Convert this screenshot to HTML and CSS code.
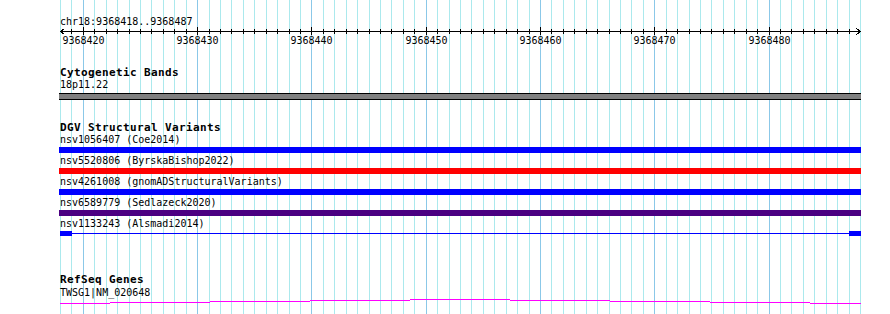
FILE: index.html
```html
<!DOCTYPE html>
<html lang="en">
<head>
    <meta charset="UTF-8">
    <title>chr18:9368418..9368487</title>
    <link rel="stylesheet" href="styles.css">
</head>
<body>

<div class="view">
    <!-- one line per base, drawn by the script below -->
    <svg class="grid" id="grid" width="802" height="314"></svg>

    <div class="locus">chr18:9368418..9368487</div>
    <svg class="ruler" id="ruler" width="802" height="22"></svg>

    <div class="track track-cyto">
        <div class="track-title">Cytogenetic Bands</div>
        <div class="feat-label">18p11.22</div>
        <div class="band"></div>
    </div>

    <div class="track track-dgv">
        <div class="track-title">DGV Structural Variants</div>
        <div class="feat">
            <div class="feat-label">nsv1056407 (Coe2014)</div>
            <div class="bar bar-blue"></div>
        </div>
        <div class="feat">
            <div class="feat-label">nsv5520806 (ByrskaBishop2022)</div>
            <div class="bar bar-red"></div>
        </div>
        <div class="feat">
            <div class="feat-label">nsv4261008 (gnomADStructuralVariants)</div>
            <div class="bar bar-blue"></div>
        </div>
        <div class="feat">
            <div class="feat-label">nsv6589779 (Sedlazeck2020)</div>
            <div class="bar bar-purple"></div>
        </div>
        <div class="feat">
            <div class="feat-label">nsv1133243 (Alsmadi2014)</div>
            <div class="span"><span class="span-end"></span><span class="span-end"></span></div>
        </div>
    </div>

    <div class="track track-genes">
        <div class="track-title">RefSeq Genes</div>
        <div class="feat-label gene-label">TWSG1|NM_020648</div>
        <svg class="wiggle" width="802" height="7">
            <rect x="0" y="5" width="50" height="1"/>
            <rect x="50" y="4" width="100" height="1"/>
            <rect x="150" y="3" width="100" height="1"/>
            <rect x="250" y="2" width="100" height="1"/>
            <rect x="350" y="1" width="100" height="1"/>
            <rect x="450" y="2" width="100" height="1"/>
            <rect x="550" y="3" width="100" height="1"/>
            <rect x="650" y="4" width="100" height="1"/>
            <rect x="750" y="5" width="51" height="1"/>
        </svg>
    </div>
</div>

<script>
    var NS = "http://www.w3.org/2000/svg";
    var START = 9368418;
    var BASES = 70;
    var WIDTH = 800;

    function add(parent, tag, attrs, text) {
        var el = document.createElementNS(NS, tag);
        for (var k in attrs) el.setAttribute(k, attrs[k]);
        if (text) el.textContent = text;
        parent.appendChild(el);
        return el;
    }

    var grid = document.getElementById("grid");
    var ruler = document.getElementById("ruler");

    add(ruler, "rect", {x: 0, y: 5, width: 801, height: 1, "class": "axis"});
    add(ruler, "path", {d: "M4.5,2.5 L0.5,5.5 L4.5,8.5", "class": "arrow"});
    add(ruler, "path", {d: "M796.5,2.5 L800.5,5.5 L796.5,8.5", "class": "arrow"});

    for (var i = 0; i <= BASES; i++) {
        var x = Math.round(i * WIDTH / BASES);
        var major = (START + i) % 10 === 0;
        add(grid, "rect", {x: x, y: 0, width: 1, height: 314, "class": major ? "line-major" : "line"});
        if (i === 0 || i === BASES) continue;
        add(ruler, "rect", {x: x, y: major ? 1 : 3, width: 1, height: major ? 8 : 5, "class": "axis"});
        if (major) {
            add(ruler, "text", {x: x + 0.5, y: 18, "class": "tick-label"}, String(START + i));
        }
    }
</script>

</body>
</html>
```

FILE: styles.css
```css
body {
    margin: 0;
    background: #ffffff;
    font-family: "DejaVu Sans Mono", "Liberation Mono", monospace;
    font-size: 10px;
    color: #000000;
}
.view {
    position: relative;
    z-index: 0;
    padding: 16px 0 0 60px;
    width: 802px;
    height: 298px;
}
.grid {
    position: absolute;
    left: 60px;
    top: 0;
    z-index: -1;
    shape-rendering: crispEdges;
}
.grid .line {
    fill: #abe9ed;
}
.grid .line-major {
    fill: #8bc8e8;
}
.locus {
    line-height: 12px;
}
.ruler {
    display: block;
    margin-top: -2px;
    overflow: visible;
    shape-rendering: crispEdges;
}
.ruler .axis {
    fill: #000000;
}
.ruler .arrow {
    fill: none;
    stroke: #000000;
    stroke-width: 1;
}
.ruler .tick-label {
    font-family: "DejaVu Sans Mono", monospace;
    font-size: 10px;
    text-anchor: middle;
    fill: #000000;
}
.track-title {
    font-size: 11px;
    font-weight: bold;
    letter-spacing: 0.38px;
    line-height: 12px;
}
.feat-label {
    line-height: 12px;
    white-space: nowrap;
}
.gene-label {
    line-height: 13px;
}
.track-cyto {
    margin-top: 19px;
}
.band {
    margin: 2px 0 0 -1px;
    width: 802px;
    height: 5px;
    background: #808080;
    border-top: 1px solid #000000;
    border-bottom: 1px solid #000000;
}
.track-dgv {
    margin-top: 22px;
}
.feat {
    margin-bottom: 2px;
}
.bar {
    margin: 1px 0 0 -1px;
    width: 802px;
    height: 6px;
}
.bar-blue {
    background: #0000ff;
}
.bar-red {
    background: #ff0000;
}
.bar-purple {
    background: #4b0082;
}
.span {
    display: flex;
    justify-content: space-between;
    margin: 1px 0 0 0;
    width: 801px;
    height: 5px;
    background: linear-gradient(#0000ff, #0000ff) center / 100% 1px no-repeat;
}
.span-end {
    width: 12px;
    height: 5px;
    background: #0000ff;
}
.track-genes {
    margin-top: 38px;
}
.wiggle {
    display: block;
    margin-top: -1px;
    shape-rendering: crispEdges;
}
.wiggle rect {
    fill: #ff00ff;
}
```
